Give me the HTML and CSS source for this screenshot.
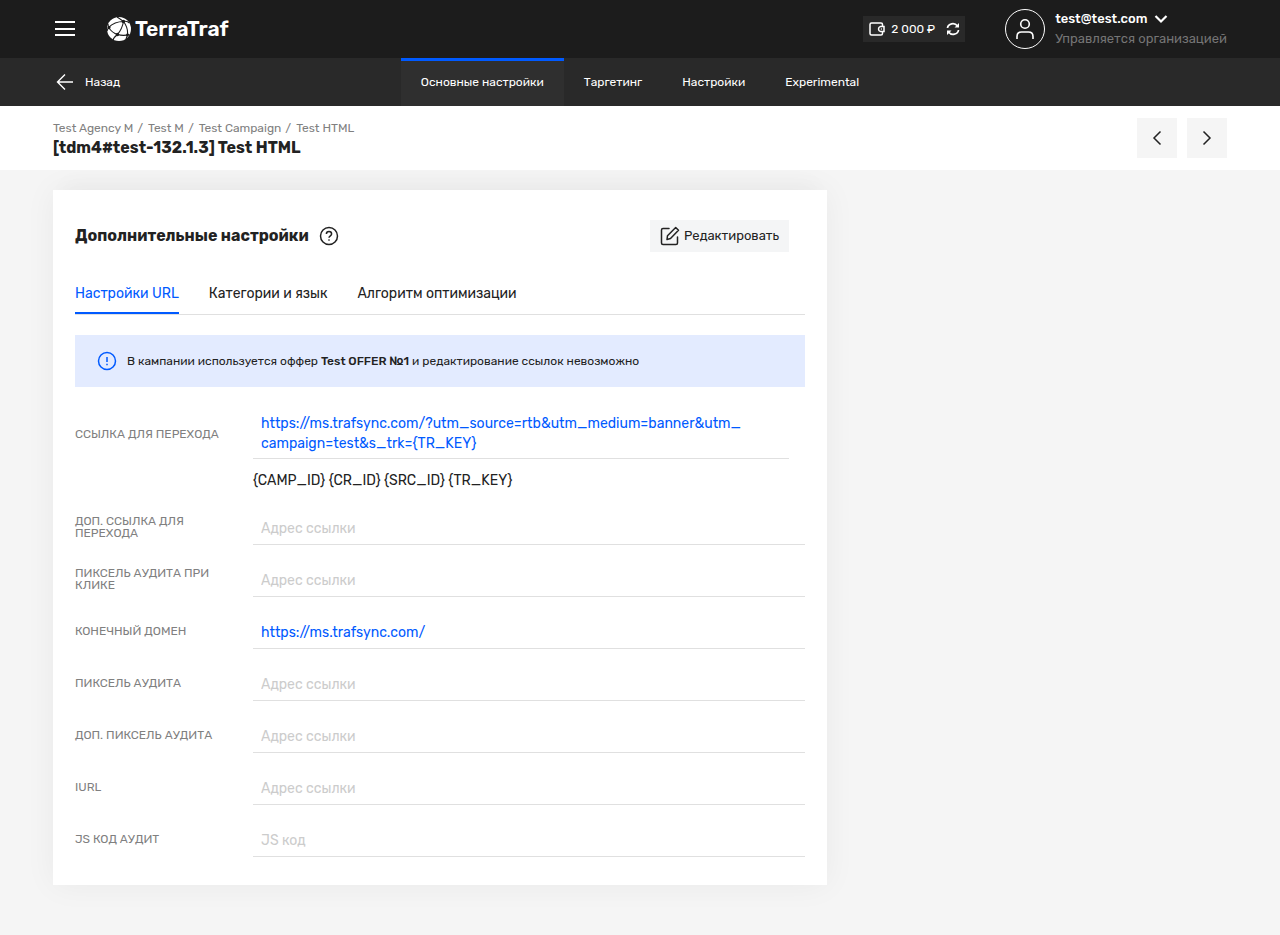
FILE: index.html
```html
<!DOCTYPE html>
<html lang="ru">
<head>
<meta charset="utf-8">
<meta name="viewport" content="width=device-width, initial-scale=1">
<title>Test HTML — TerraTraf</title>
<link rel="stylesheet" href="styles.css">
</head>
<body>
<header class="topbar">
  <button class="icon-button" type="button" aria-label="Меню">
    <svg width="24" height="24" viewBox="0 0 24 24" fill="none" stroke="#fff" stroke-width="2"><path d="M2 5h20M2 12h20M2 18h20"/></svg>
  </button>
  <a class="logo" href="#">
    <svg width="24" height="24" viewBox="0 0 24 24"><circle cx="12" cy="12" r="12" fill="#fff"/><g fill="none" stroke="#1c1c1c" stroke-width="1.100"><path d="M10 0C12 1 14 2.500 16.500 4.500C19 3.800 21 4.500 22.500 6M1.500 10.500C6 6 11 4.500 16.500 4.500C15.500 10 13.500 14 10.500 17.500C8 19.500 6.500 21 6 23M16.500 4.500C20 9 21 13 20.500 18M1.500 10.500C4 14 7 16.500 10.500 17.500C14 18.500 18 18.700 22.500 17.500M0 14L1.500 10.500L1 7M20.500 18L19 22"/></g><g fill="#1c1c1c"><circle cx="16.500" cy="4.500" r="1.700"/><circle cx="2" cy="10.500" r="1.500"/><circle cx="10.500" cy="17.500" r="1.700"/><circle cx="20.500" cy="18" r="1.400"/></g></svg>
    <span>TerraTraf</span>
  </a>
  <div class="balance">
    <svg width="16" height="16" viewBox="0 0 16 16" fill="none" stroke="#fff" stroke-width="1.500"><path d="M13.500 5V3.500Q13.500 2 12 2H2.500Q1 2 1 3.500V12.500Q1 14 2.500 14H12Q13.500 14 13.500 12.500V11M11.500 5.500H15V10.500H11.500Q9.500 10 9.500 8T11.500 5.500Z"/><circle cx="12.300" cy="8" r=".4" fill="#fff" stroke-width=".6"/></svg>
    <span>2 000 ₽</span>
    <button class="icon-button" type="button" aria-label="Обновить баланс">
      <svg width="14" height="14" viewBox="0 0 14 14" fill="none" stroke="#fff" stroke-width="1.700"><path d="M1.500 6C2 1.500 8.500 0 11.500 4M12.500 8C12 12.500 5.500 14 2.500 10"/><path d="M13 1V5.500H8.500ZM1 13V8.500H5.500Z" fill="#fff" stroke="none"/></svg>
    </button>
  </div>
  <div class="account">
    <svg width="40" height="40" viewBox="0 0 40 40" fill="none" stroke="#fff"><circle cx="20" cy="20" r="19.500"/><g stroke-width="1.600"><circle cx="20" cy="15" r="4.300"/><path d="M12 30V27.500Q12 23 16.500 23H23.500Q28 23 28 27.500V30"/></g></svg>
    <div class="account-text">
      <button class="account-name" type="button">test@test.com
        <svg width="14" height="10" viewBox="0 0 14 10" fill="none" stroke="#fff" stroke-width="2.200"><path d="M1.500 2L7 7.500L12.500 2"/></svg>
      </button>
      <span class="account-role">Управляется организацией</span>
    </div>
  </div>
</header>

<nav class="subnav">
  <a class="back" href="#">
    <svg width="18" height="18" viewBox="0 0 18 18" fill="none" stroke="#fff" stroke-width="1.400"><path d="M17 9H2M9 1.500L1.500 9L9 16.500"/></svg>
    Назад
  </a>
  <div class="sections">
    <a class="section active" href="#">Основные настройки</a>
    <a class="section" href="#">Таргетинг</a>
    <a class="section" href="#">Настройки</a>
    <a class="section" href="#">Experimental</a>
  </div>
</nav>

<div class="titlebar">
  <div>
    <nav class="crumbs"><a href="#">Test Agency M</a><span>/</span><a href="#">Test M</a><span>/</span><a href="#">Test Campaign</a><span>/</span><a href="#">Test HTML</a></nav>
    <h1>[tdm4#test-132.1.3] Test HTML</h1>
  </div>
  <div class="pager">
    <button type="button" aria-label="Назад"><svg width="16" height="16" viewBox="0 0 16 16" fill="none" stroke="#222" stroke-width="1.500"><path d="M11.500 1.500L5 8L11.500 14.500"/></svg></button>
    <button type="button" aria-label="Вперёд"><svg width="16" height="16" viewBox="0 0 16 16" fill="none" stroke="#222" stroke-width="1.500"><path d="M4.500 1.500L11 8L4.500 14.500"/></svg></button>
  </div>
</div>

<main class="content">
  <section class="card">
    <div class="card-head">
      <h2>Дополнительные настройки</h2>
      <button class="icon-button" type="button" aria-label="Справка">
        <svg width="20" height="20" viewBox="0 0 20 20" fill="none" stroke="#222" stroke-width="1.500"><circle cx="10" cy="10" r="8.500"/><path d="M7.400 8C7.400 4.700 12.600 4.700 12.600 8C12.600 9.800 10 9.800 10 11.800"/><circle cx="10" cy="14" r=".5" fill="#222" stroke-width=".6"/></svg>
      </button>
      <button class="edit" type="button">
        <svg width="20" height="20" viewBox="0 0 20 20" fill="none" stroke="#222" stroke-width="1.500" stroke-linejoin="round" stroke-linecap="round"><path d="M9 2.500H3Q1.500 2.500 1.500 4V17Q1.500 18.500 3 18.500H16Q17.500 18.500 17.500 17V11M15.700 1.500L18.500 4.300L10.500 12.500L7 13.500L7.500 9.700Z"/></svg>
        Редактировать
      </button>
    </div>

    <div class="tabs" role="tablist">
      <button class="tab active" role="tab" aria-selected="true" type="button">Настройки URL</button>
      <button class="tab" role="tab" type="button">Категории и язык</button>
      <button class="tab" role="tab" type="button">Алгоритм оптимизации</button>
    </div>

    <div class="notice">
      <svg width="20" height="20" viewBox="0 0 20 20" fill="none" stroke="#005aff" stroke-width="1.500"><circle cx="10" cy="10" r="8.500"/><path d="M10 6V11M10 12.800V14.200"/></svg>
      <p>В кампании используется оффер <strong>Test OFFER №1</strong> и редактирование ссылок невозможно</p>
    </div>

    <div class="fields">
      <div class="field">
        <span class="label">Ссылка для перехода</span>
        <a class="value long" href="#">https://ms.trafsync.com/?utm_source=rtb&amp;utm_medium=banner&amp;utm_<wbr>campaign=test&amp;s_trk={TR_KEY}</a>
        <p class="macros">{CAMP_ID} {CR_ID} {SRC_ID} {TR_KEY}</p>
      </div>
      <div class="field"><label class="label" for="extra">Доп. ссылка для перехода</label><input class="value" id="extra" placeholder="Адрес ссылки"></div>
      <div class="field"><label class="label" for="click">Пиксель аудита при клике</label><input class="value" id="click" placeholder="Адрес ссылки"></div>
      <div class="field"><span class="label">Конечный домен</span><a class="value" href="#">https://ms.trafsync.com/</a></div>
      <div class="field"><label class="label" for="pixel">Пиксель аудита</label><input class="value" id="pixel" placeholder="Адрес ссылки"></div>
      <div class="field"><label class="label" for="pixel2">Доп. пиксель аудита</label><input class="value" id="pixel2" placeholder="Адрес ссылки"></div>
      <div class="field"><label class="label" for="iurl">IURL</label><input class="value" id="iurl" placeholder="Адрес ссылки"></div>
      <div class="field"><label class="label" for="js">JS код аудит</label><input class="value" id="js" placeholder="JS код"></div>
    </div>
  </section>
</main>
</body>
</html>
```
FILE: styles.css
```css
* { box-sizing: border-box; }
body {
  margin: 0;
  background: #f5f5f5;
  color: #222;
  font: 14px/20px Rubik, Roboto, sans-serif;
}
a { color: inherit; text-decoration: none; }
button { border: 0; padding: 0; background: none; color: inherit; font: inherit; cursor: pointer; }
h1, h2, p { margin: 0; }
svg { display: block; flex: none; }
.icon-button { display: flex; }

.topbar {
  display: flex;
  align-items: center;
  height: 58px;
  padding: 0 53px;
  background: #1c1c1c;
  color: #fff;
}
.logo {
  display: flex;
  align-items: center;
  gap: 4px;
  margin-left: 30px;
  margin-right: auto;
  font: 600 21px/24px Rubik, Lato, sans-serif;
}
.balance {
  display: flex;
  align-items: center;
  height: 26px;
  padding: 0 5px 0 6px;
  background: #292929;
  font-size: 12px;
}
.balance span { margin: 0 11px 0 6px; }
.account { display: flex; gap: 10px; margin-left: 40px; font-size: 13px; }
.account-text { display: flex; flex-direction: column; align-items: flex-start; }
.account-name { display: flex; align-items: center; gap: 7px; font-weight: 500; }
.account-role { color: #757575; }

.subnav {
  display: grid;
  grid-template-columns: 1fr auto 1fr;
  height: 48px;
  padding: 0 53px;
  background: #292929;
  color: #fff;
  font-size: 12px;
}
.back { display: flex; align-items: center; gap: 11px; padding-left: 3px; }
.sections { display: flex; }
.section {
  display: flex;
  align-items: center;
  padding: 0 20px 3px;
  border-top: 3px solid transparent;
}
.section.active { border-top-color: #005aff; background: #2f2f2f; }

.titlebar {
  position: relative;
  display: flex;
  align-items: center;
  justify-content: space-between;
  height: 64px;
  padding: 0 53px;
  background: #fff;
}
.crumbs { display: flex; color: #808080; font-size: 12px; }
.crumbs span { margin: 0 5px 0 4px; }
h1, h2 { font-size: 16px; line-height: 20px; font-weight: 700; }
.pager { display: flex; gap: 10px; }
.pager button { display: grid; place-items: center; width: 40px; height: 40px; background: #f5f5f5; }

.content {
  display: grid;
  grid-template-columns: minmax(0, 1fr) 400px;
  padding: 20px 53px 50px;
}
.card {
  padding: 30px 22px 28px;
  background: #fff;
  box-shadow: 0 0 30px rgba(0, 0, 0, .05), 0 -20px 20px -10px rgba(0, 0, 0, .02);
}
.card-head { display: flex; align-items: center; gap: 10px; padding-right: 16px; }
.edit {
  display: flex;
  align-items: center;
  gap: 4px;
  height: 32px;
  margin-left: auto;
  padding: 0 10px;
  background: #f4f5f6;
  font-size: 13px;
}

.tabs { display: flex; gap: 30px; margin-top: 20px; border-bottom: 1px solid #e0e0e0; }
.tab { height: 42px; padding-top: 3px; border-bottom: 2px solid transparent; }
.tab.active { border-bottom-color: #005aff; color: #005aff; }

.notice {
  display: flex;
  align-items: center;
  gap: 10px;
  min-height: 52px;
  margin-top: 20px;
  padding: 0 22px;
  background: #e3ebff;
  font-size: 12px;
}
.notice strong { font-weight: 500; }

.fields { display: grid; gap: 19px; margin-top: 26px; }
.field {
  display: grid;
  grid-template-columns: 158px minmax(0, 1fr);
  column-gap: 20px;
  align-items: center;
}
.label {
  padding-bottom: 4px;
  color: #808080;
  font-size: 12px;
  line-height: 12px;
  text-transform: uppercase;
}
.value {
  width: 100%;
  min-width: 0;
  height: 33px;
  padding: 6px 8px;
  border: 0;
  border-bottom: 1px solid #e0e0e0;
  background: none;
  font: inherit;
}
.value::placeholder { color: #ccc; opacity: 1; }
a.value { padding-top: 7px; color: #005aff; }
.value.long { width: auto; height: auto; margin-right: 16px; padding: 1px 8px 4px; }
.macros { grid-column: 2; margin: 12px 0 2px; }
```
